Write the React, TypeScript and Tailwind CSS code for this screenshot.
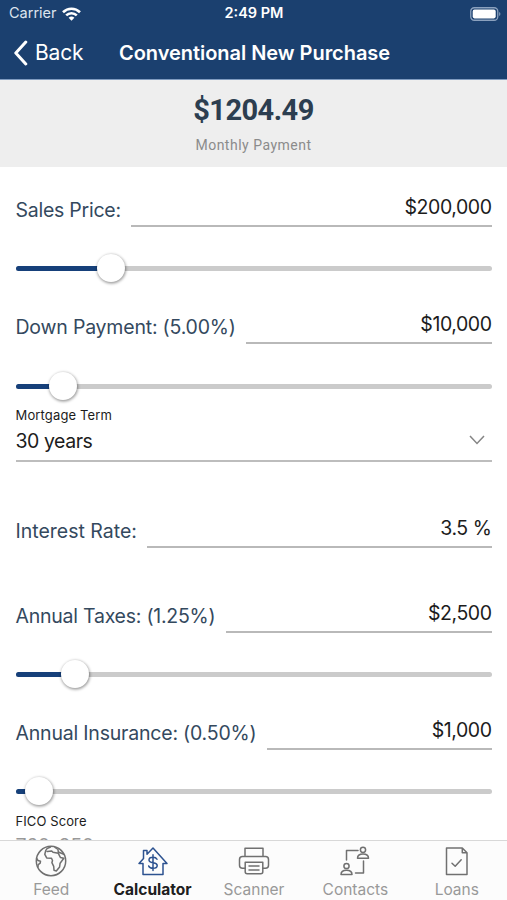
import type { ReactNode } from 'react'

type FieldProps = {
  label: string
  value: string
  spacing?: string
}

function Field({ label, value, spacing = 'tracking-[-0.2px]' }: FieldProps) {
  return (
    <div className="flex h-[40px] items-stretch">
      <label className={`flex h-[46px] shrink-0 items-center text-[19.5px] leading-6 text-[#34495e] ${spacing}`}>
        {label}
      </label>
      <div className="ml-[10.5px] flex flex-1 items-center justify-end border-b-2 border-[#b9b9b9] pt-px text-[19.5px] leading-6 tracking-[-0.45px] text-[#1c1c1c]">
        {value}
      </div>
    </div>
  )
}

function Slider({ percent }: { percent: number }) {
  return (
    <div className="relative flex h-[30px] items-center">
      <div className="h-[5px] w-full overflow-hidden rounded-full bg-[#cbcbcb]">
        <div className="h-full bg-[#16407a]" style={{ width: `${percent}%` }} />
      </div>
      <div
        className="absolute size-[28px] -translate-x-1/2 rounded-full bg-white shadow-[0.5px_1px_3px_0.5px_rgba(0,0,0,0.4)]"
        style={{ left: `${percent}%` }}
      />
    </div>
  )
}

function Icon({ children }: { children: ReactNode }) {
  return (
    <svg viewBox="0 0 32 32" className="size-8" fill="none" stroke="currentColor" strokeWidth="1.5" strokeLinecap="round" strokeLinejoin="round">
      {children}
    </svg>
  )
}

const tabs = [
  {
    label: 'Feed',
    icon: (
      <Icon>
        <circle cx="16" cy="16" r="14.7" />
        <path d="M15.5 2 12 3.7l-1.3 2-.9 3.6 1.9 3.6 4.8.4 1 2.2-.6 2.2 1.8 3.6.3 4 2.3.6 3.3-4 .5-3.7 3.7-5-3.3-.6-2.2-4.3-5.3-1-1.3-1.3-4.5.5M20 2.5l3 2 .3 2.5 5.5 2.2M1.7 13.5l1.3 2 2.5.7-.3 2-2 1.5-.2 2" />
      </Icon>
    ),
  },
  {
    label: 'Calculator',
    active: true,
    icon: (
      <Icon>
        <path d="M2 18.5 6.5 13.5V5.5H10v3.7L16 3l14 15.5h-4v11H6v-11Z" />
        <path d="M20 14.2c-.6-1.3-2-2-4-2-2.3 0-4 1-4 2.7 0 4 8.2 1.8 8.2 5.5 0 1.7-1.8 2.8-4.2 2.8-2.3 0-3.8-.8-4.3-2.3M16 9.8v15.8" />
      </Icon>
    ),
  },
  {
    label: 'Scanner',
    icon: (
      <Icon>
        <path d="M7 11.5V3.2h18v8.3M7.2 23.2H4.5a3 3 0 0 1-3-3v-5.7a3 3 0 0 1 3-3h23a3 3 0 0 1 3 3v5.7a3 3 0 0 1-3 3h-2.7" />
        <path d="M7.2 17.2h17.6v9.5a2 2 0 0 1-2 2H9.2a2 2 0 0 1-2-2ZM11 21h10M11 25h10" />
      </Icon>
    ),
  },
  {
    label: 'Contacts',
    icon: (
      <Icon>
        <path d="M7.5 15V5.5H19M24.5 16v12h-8" />
        <circle cx="24" cy="4.8" r="2.6" />
        <path d="M18.5 13.3c0-3 2.2-4.3 5.5-4.3s5.5 1.3 5.5 4.3Z" />
        <circle cx="7.5" cy="21" r="2.6" />
        <path d="M2 29.5c0-3 2.2-4.3 5.5-4.3s5.5 1.3 5.5 4.3Z" />
      </Icon>
    ),
  },
  {
    label: 'Loans',
    icon: (
      <Icon>
        <path d="M5.5 3h15.8L26 7.7v21.8H5.5ZM21.3 3v4.7H26M11 18.2l3.2 3 6-6.5" />
      </Icon>
    ),
  },
]

export default function App() {
  return (
    <div className="flex h-[900px] w-[507px] flex-col overflow-hidden bg-white font-[Inter,'Liberation_Sans',sans-serif]">
      <header className="h-[80px] shrink-0 border-b border-[#7f9bc0] bg-[#1b406f] text-white">
        <div className="grid h-[27px] grid-cols-3 items-center pr-[6px] pl-[9px] text-[14.5px] leading-none">
          <div className="flex items-center gap-[5px]">
            <span className="text-[#dde4ee]">Carrier</span>
            <svg viewBox="0 0 19 14" className="h-[14px] w-[19px]" fill="none" stroke="white" strokeWidth="2.6">
              <path d="M1 5.2a12.2 12.2 0 0 1 17 0M4.2 8.4a7.6 7.6 0 0 1 10.6 0" />
              <path d="M6.6 10.8a4.2 4.2 0 0 1 5.8 0L9.5 13.8Z" fill="white" stroke="none" />
            </svg>
          </div>
          <span className="-ml-[2px] text-center font-semibold">2:49 PM</span>
          <svg viewBox="0 0 31 14" className="h-[14px] w-[31px] justify-self-end" fill="none">
            <rect x=".75" y=".75" width="27" height="12.5" rx="3.5" stroke="#8ba1be" strokeWidth="1.3" />
            <rect x="2.7" y="2.6" width="23" height="8.8" rx="1.8" fill="white" />
            <path d="M29.2 5v4c1.6-.6 1.6-3.4 0-4Z" fill="#8ba1be" />
          </svg>
        </div>
        <div className="flex h-[51px] items-center pl-[14px]">
          <svg viewBox="0 0 14 26" className="h-[26px] w-[14px]" fill="none" stroke="white" strokeWidth="3" strokeLinecap="round" strokeLinejoin="round">
            <path d="m11.8 2-10 11 10 11" />
          </svg>
          <span className="ml-[7px] w-[84px] text-[21px] tracking-[-0.2px]">Back</span>
          <h1 className="text-[20px] font-semibold tracking-[-0.04px] whitespace-nowrap">Conventional New Purchase</h1>
        </div>
      </header>

      <section className="flex h-[87px] shrink-0 flex-col items-center bg-[#eeeeee] pt-[13px] font-[Roboto,sans-serif]">
        <p className="text-[29px] leading-[34px] font-bold tracking-[-0.55px] text-[#2c3e50]">$1204.49</p>
        <p className="mt-[9px] text-[14px] leading-[18px] tracking-[0.5px] text-[#8b8b8b]">Monthly Payment</p>
      </section>

      <main className="min-h-0 flex-1 overflow-hidden px-[15.5px] pt-[20px]">
        <Field label="Sales Price:" value="$200,000" spacing="tracking-[-0.25px]" />
        <div className="mt-[26px]">
          <Slider percent={20} />
        </div>
        <div className="mt-[21px]">
          <Field label="Down Payment: (5.00%)" value="$10,000" />
        </div>
        <div className="mt-[27px]">
          <Slider percent={10} />
        </div>

        <div className="mt-[4px] h-[57px] border-b-2 border-[#bdbdbd] text-[#1c1c1c]">
          <p className="text-[13px] leading-[20px] tracking-[0.15px]">Mortgage Term</p>
          <div className="mt-[3px] flex items-center justify-between pr-[7px]">
            <span className="text-[19.5px] leading-[26px] tracking-[-0.45px]">30 years</span>
            <svg viewBox="0 0 16 10" className="-mt-[3px] h-[10px] w-[16px]" fill="none" stroke="#858585" strokeWidth="1.5">
              <path d="m1 1 7 7.5L15 1" />
            </svg>
          </div>
        </div>

        <div className="mt-[46px]">
          <Field label="Interest Rate:" value="3.5 %" spacing="tracking-[0px]" />
        </div>
        <div className="mt-[45px]">
          <Field label="Annual Taxes: (1.25%)" value="$2,500" spacing="tracking-[-0.24px]" />
        </div>
        <div className="mt-[26px]">
          <Slider percent={12.5} />
        </div>
        <div className="mt-[21px]">
          <Field label="Annual Insurance: (0.50%)" value="$1,000" />
        </div>
        <div className="mt-[26px]">
          <Slider percent={5} />
        </div>
        <div className="mt-[5px] text-[#1c1c1c]">
          <p className="text-[13px] leading-[20px] tracking-[0.1px]">FICO Score</p>
          <p className="mt-[2px] text-[19.5px] leading-[26px] tracking-[-0.3px] text-[#999999]">760-850</p>
        </div>
      </main>

      <nav className="grid h-[60px] shrink-0 grid-cols-5 border-t border-[#d8d8d8] bg-[#fcfcfc]">
        {tabs.map((tab) => (
          <div key={tab.label} className="flex flex-col items-center pt-[4px] pl-px">
            <span className={tab.active ? 'text-[#2c5290]' : 'text-[#707070]'}>{tab.icon}</span>
            <span className={`mt-[3px] text-[15.5px] leading-[20px] ${tab.active ? 'font-bold text-[#202020]' : 'text-[#999999]'}`}>
              {tab.label}
            </span>
          </div>
        ))}
      </nav>
    </div>
  )
}
